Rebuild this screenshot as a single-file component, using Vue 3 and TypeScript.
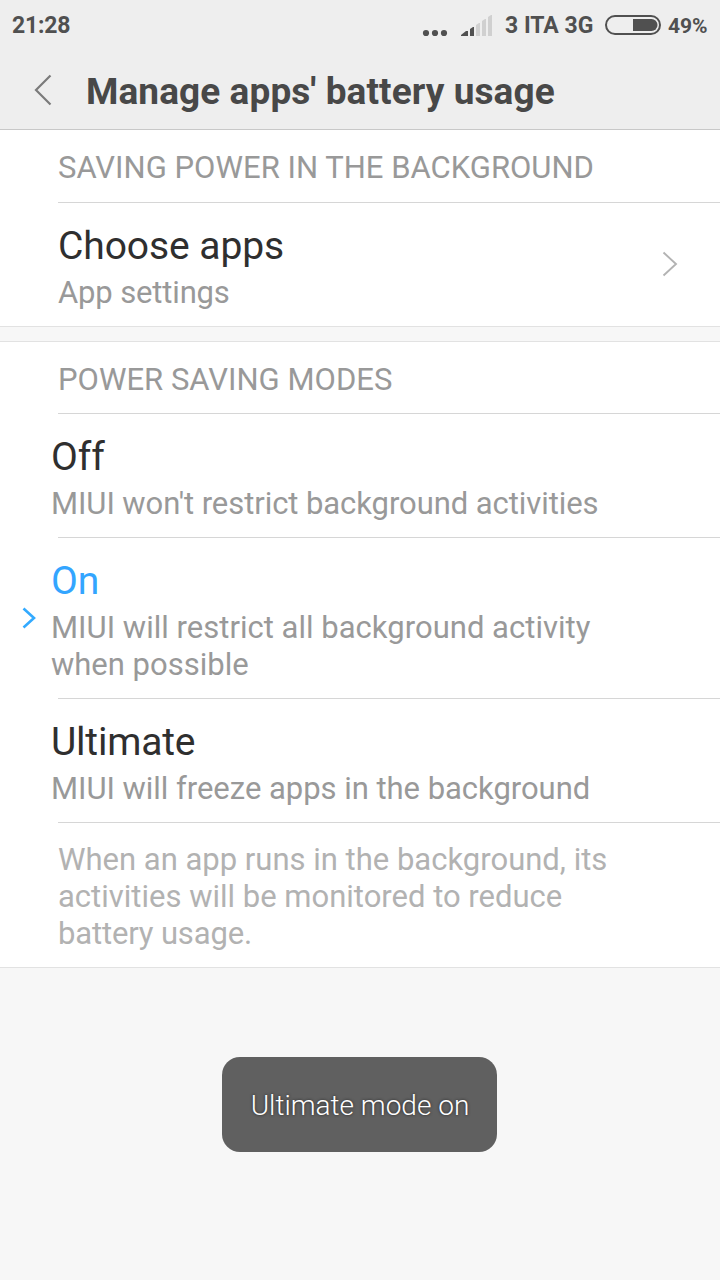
<script setup lang="ts">
interface Mode { title: string; lines: string[]; selected: boolean }
const modes: Mode[] = [
  { title: 'Off', lines: ["MIUI won't restrict background activities"], selected: false },
  { title: 'On', lines: ['MIUI will restrict all background activity', 'when possible'], selected: true },
  { title: 'Ultimate', lines: ['MIUI will freeze apps in the background'], selected: false },
]
const note: string[] = ['When an app runs in the background, its', 'activities will be monitored to reduce', 'battery usage.']
</script>

<template>
  <main class="screen">
    <header class="top">
      <div class="status">
        <span class="clock">21:28</span>
        <svg class="dots" width="26" height="8" viewBox="0 0 26 8"><circle cx="4" cy="4" r="3.1" /><circle cx="13" cy="4" r="3.1" /><circle cx="22" cy="4" r="3.1" /></svg>
        <svg class="signal" width="32" height="24" viewBox="0 0 32 24">
          <path d="M0 23v-1l5-4h2v5zM9 23v-7l3-2h1v9z" fill="#505050" />
          <path d="M15 23V12l3-2h1v13zM21 23V8l3-2h1v17zM27 23V4l3-2h1v21z" fill="#d0d0d0" />
        </svg>
        <span class="carrier">3 ITA 3G</span>
        <svg class="battery" width="58" height="22" viewBox="0 0 58 22"><rect x="2" y="2" width="54" height="18" rx="9" fill="none" stroke="#505050" stroke-width="2" /><path d="M29 5h18.500a6 6 0 0 1 0 12H29z" fill="#505050" /></svg>
        <span class="percent">49%</span>
      </div>
      <div class="titlebar">
        <svg class="back" width="20" height="32" viewBox="0 0 20 32"><path d="M16.500 1.500 2 16l14.500 14.500" /></svg>
        <h1>Manage apps' battery usage</h1>
      </div>
    </header>
    <section class="group">
      <h2>SAVING POWER IN THE BACKGROUND</h2>
      <div class="row choose">
        <div><div class="title">Choose apps</div><p>App settings</p></div>
        <svg class="next" width="18" height="28" viewBox="0 0 18 28"><path d="M3.500 2.500 16 14 3.500 25.500" /></svg>
      </div>
    </section>
    <section class="group second">
      <h2>POWER SAVING MODES</h2>
      <div v-for="mode in modes" :key="mode.title" class="row mode" :class="[mode.title.toLowerCase(), { selected: mode.selected }]">
        <div class="marker"><svg v-if="mode.selected" width="14" height="22" viewBox="0 0 14 22"><path d="M1.500 1.500 12 11 1.500 20.500" /></svg></div>
        <div><div class="title">{{ mode.title }}</div><p v-for="line in mode.lines" :key="line">{{ line }}</p></div>
      </div>
      <div class="note"><p v-for="line in note" :key="line">{{ line }}</p></div>
    </section>
    <div class="toast">Ultimate mode on</div>
  </main>
</template>

<style>
body { margin: 0; background: #f7f7f7; }
</style>
<style scoped>
* { box-sizing: border-box; }
.screen { width: 720px; height: 1280px; overflow: hidden; background: #f7f7f7; font-family: Roboto, sans-serif; color: #2f2f2f; display: flex; flex-direction: column; }
h1, h2, p { margin: 0; white-space: nowrap; }
svg { display: block; flex: none; }
.top { height: 130px; background: #eee; border-bottom: 1px solid #c8c8c8; flex: none; }
.status { height: 50px; display: flex; align-items: center; padding: 0 12px; color: #505050; font-size: 23px; font-weight: 700; white-space: nowrap; }
.clock { width: 410px; flex: none; letter-spacing: -0.2px; }
.dots { fill: #505050; margin-top: 16px; }
.signal { margin-left: 13px; }
.carrier { margin-left: 12px; width: 99px; }
.percent { margin-left: 6px; font-size: 21px; padding-top: 1px; }
.titlebar { height: 79px; display: flex; align-items: center; padding: 5px 0 0 34px; }
.back { margin-right: 32px; margin-top: -4px; fill: none; stroke: #7b7b7b; stroke-width: 2.2; }
h1 { font-size: 37px; line-height: 44px; font-weight: 700; color: #484848; letter-spacing: 0.08px; }
.group { background: #fff; border-bottom: 1px solid #e2e2e2; flex: none; }
.second { margin-top: 14px; border-top: 1px solid #e2e2e2; }
h2 { height: 72px; padding: 20px 0 0 58px; font-size: 31px; line-height: 36px; font-weight: 400; color: #999; letter-spacing: 0.02px; }
.second h2 { height: 71px; }
.row { position: relative; display: flex; }
.row::before, .note::before { content: ''; position: absolute; top: 0; left: 58px; right: 0; height: 1px; background: #d6d6d6; }
.choose { height: 124px; padding: 20px 42px 0 58px; justify-content: space-between; }
.title { font-size: 39px; line-height: 48px; letter-spacing: -0.08px; }
p { font-size: 31px; line-height: 37px; color: #999; }
.choose p, .mode p:first-of-type { margin-top: 4px; }
.choose p { letter-spacing: -0.15px; }
.mode { padding: 20px 0 15px; }
.off p { letter-spacing: -0.07px; }
.on p:first-of-type { letter-spacing: 0.02px; }
.ultimate .title { letter-spacing: -0.2px; }
.ultimate p { letter-spacing: -0.03px; }
.marker { width: 51px; padding-left: 22px; padding-bottom: 4px; align-self: center; flex: none; }
.marker path { fill: none; stroke: #33aaff; stroke-width: 2.6; }
.selected .title { color: #33a5ff; }
.next { margin-top: 28px; fill: none; stroke: #b3b3b3; stroke-width: 1.9; }
.note { position: relative; height: 145px; padding: 19px 0 0 58px; }
.note p { color: #b2b2b2; }
.note p:last-child { letter-spacing: -0.15px; }
.toast { width: 275px; height: 95px; margin: 89px 0 0 222px; padding-left: 1px; border-radius: 18px; background: #606060; color: #fff; font-size: 28px; font-weight: 300; line-height: 97px; text-align: center; text-shadow: 0 0 3px #222; }
</style>
